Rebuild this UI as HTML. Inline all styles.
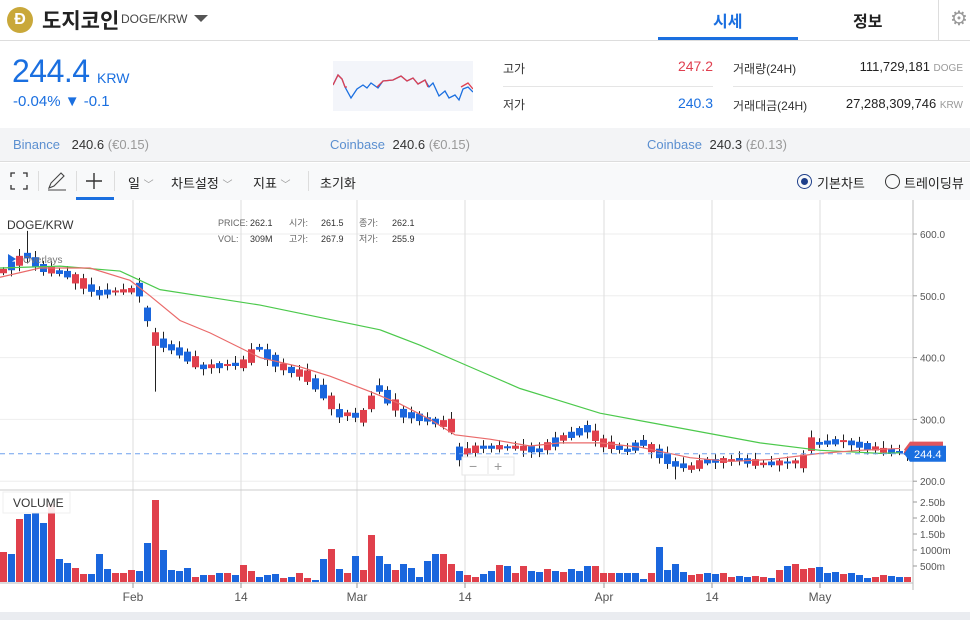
<!DOCTYPE html>
<html><head><meta charset="utf-8">
<style>
*{margin:0;padding:0;box-sizing:border-box}
body{width:970px;height:620px;overflow:hidden;background:#fff;font-family:"Liberation Sans","Noto Sans CJK KR",sans-serif;color:#222;position:relative}
.a{position:absolute;white-space:nowrap}
</style></head><body>
<div class="a" style="left:7px;top:7px;width:26px;height:26px;border-radius:50%;background:#c9a83a;color:#fff;font-weight:bold;font-size:16px;text-align:center;line-height:26px">Ð</div>
<div class="a" style="left:42px;top:5px;font-size:21px;font-weight:bold;color:#222">도지코인</div>
<div class="a" style="left:121px;top:12px;font-size:12px;color:#444">DOGE/KRW</div>
<div class="a" style="left:194px;top:15px;width:0;height:0;border-left:7px solid transparent;border-right:7px solid transparent;border-top:7px solid #555"></div>
<div class="a" style="left:713px;top:8px;font-size:16px;font-weight:bold;color:#1a6fe0">시세</div>
<div class="a" style="left:658px;top:37px;width:140px;height:3px;background:#1a6fe0"></div>
<div class="a" style="left:853px;top:8px;font-size:16px;font-weight:bold;color:#222">정보</div>
<div class="a" style="left:938px;top:0;width:1px;height:40px;background:#ddd"></div>
<div class="a" style="left:950px;top:6px;font-size:20px;color:#999">⚙</div>
<div class="a" style="left:0;top:40px;width:970px;height:1px;background:#ddd"></div>
<div class="a" style="left:12px;top:53px;font-size:32px;color:#1a6fe0;letter-spacing:-0.5px">244.4</div>
<div class="a" style="left:97px;top:70px;font-size:14px;color:#1a6fe0">KRW</div>
<div class="a" style="left:13px;top:93px;font-size:15px;color:#1a6fe0">-0.04% ▼ -0.1</div>
<svg class="a" style="left:333px;top:61px" width="140" height="50">
<rect width="140" height="50" fill="#f3f5fa"/>
<path d="M0 24 L5 14 L9 18 L12 26 L18 37 L24 28 L30 24 L34 27 L38 22 L45 27 L50 20 L60 19 L68 15 L74 20 L80 17 L85 23 L92 19 L96 26 L100 22 L106 35 L112 30 L116 37 L122 34 L126 39 L130 28 L135 26 L140 31" fill="none" stroke="#1a6fe0" stroke-width="1.3"/>
<path d="M0 24 L5 14 L9 18 L12 26 L14 26 M44 26 L50 20 L60 19 L68 15 L74 20 L80 17 L85 23 L92 19 L95 26 M128 26 L135 22 L140 28" fill="none" stroke="#e04050" stroke-width="1.3"/>
</svg>
<div class="a" style="left:503px;top:60px;font-size:12px;color:#333">고가</div>
<div class="a" style="left:600px;top:58px;width:113px;text-align:right;font-size:14px;color:#e04050">247.2</div>
<div class="a" style="left:503px;top:86px;width:210px;height:1px;background:#e5e5e5"></div>
<div class="a" style="left:503px;top:96px;font-size:12px;color:#333">저가</div>
<div class="a" style="left:600px;top:95px;width:113px;text-align:right;font-size:14px;color:#1a6fe0">240.3</div>
<div class="a" style="left:733px;top:60px;font-size:12px;color:#333">거래량(24H)</div>
<div class="a" style="left:800px;top:59px;width:163px;text-align:right;font-size:13px;color:#222">111,729,181 <span style="font-size:10px;color:#999">DOGE</span></div>
<div class="a" style="left:733px;top:86px;width:230px;height:1px;background:#e5e5e5"></div>
<div class="a" style="left:733px;top:97px;font-size:12px;color:#333">거래대금(24H)</div>
<div class="a" style="left:800px;top:96px;width:163px;text-align:right;font-size:13px;color:#222">27,288,309,746 <span style="font-size:10px;color:#999">KRW</span></div>
<div class="a" style="left:0;top:128px;width:970px;height:34px;background:#f3f4f6;border-bottom:1px solid #ddd"></div>
<div class="a" style="left:13px;top:137px;font-size:13px;color:#5b8fd0">Binance <span style="color:#333;margin-left:8px">240.6</span> <span style="color:#999">(€0.15)</span></div>
<div class="a" style="left:330px;top:137px;font-size:13px;color:#5b8fd0">Coinbase <span style="color:#333;margin-left:4px">240.6</span> <span style="color:#999">(€0.15)</span></div>
<div class="a" style="left:647px;top:137px;font-size:13px;color:#5b8fd0">Coinbase <span style="color:#333;margin-left:4px">240.3</span> <span style="color:#999">(£0.13)</span></div>
<div class="a" style="left:0;top:163px;width:970px;height:37px;background:#f8f9fa"></div>
<svg class="a" style="left:10px;top:172px" width="18" height="18"><path d="M1 5V1H5M13 1H17V5M17 13V17H13M5 17H1V13" fill="none" stroke="#333" stroke-width="1.3"/></svg>
<div class="a" style="left:38px;top:171px;width:1px;height:20px;background:#ddd"></div>
<svg class="a" style="left:47px;top:171px" width="20" height="20"><path d="M2 17L4 12L14 2L17 5L7 15Z M1 19H19" fill="none" stroke="#444" stroke-width="1.1"/></svg>
<div class="a" style="left:76px;top:171px;width:1px;height:20px;background:#ddd"></div>
<svg class="a" style="left:85px;top:172px" width="18" height="18"><path d="M9 1V17M1 9H17" stroke="#333" stroke-width="1.4"/></svg>
<div class="a" style="left:76px;top:197px;width:38px;height:3px;background:#1a6fe0"></div>
<div class="a" style="left:114px;top:171px;width:1px;height:20px;background:#ddd"></div>
<div class="a" style="left:128px;top:173px;font-size:13px;color:#222">일 <span style="color:#999;font-size:10px">﹀</span></div>
<div class="a" style="left:171px;top:173px;font-size:13px;color:#222">차트설정 <span style="color:#999;font-size:10px">﹀</span></div>
<div class="a" style="left:253px;top:173px;font-size:13px;color:#222">지표 <span style="color:#999;font-size:10px">﹀</span></div>
<div class="a" style="left:308px;top:171px;width:1px;height:20px;background:#ddd"></div>
<div class="a" style="left:320px;top:173px;font-size:13px;color:#222">초기화</div>
<div class="a" style="left:797px;top:174px;width:15px;height:15px;border-radius:50%;border:1.5px solid #1e3f8a"><div style="margin:2.5px;width:7px;height:7px;border-radius:50%;background:#1e3f8a"></div></div>
<div class="a" style="left:817px;top:173px;font-size:13px;color:#222">기본차트</div>
<div class="a" style="left:885px;top:174px;width:15px;height:15px;border-radius:50%;border:1.5px solid #333"></div>
<div class="a" style="left:904px;top:173px;font-size:13px;color:#222">트레이딩뷰</div>
<svg id="ch" class="a" style="left:0;top:200px" width="970" height="420" font-family="Liberation Sans, Noto Sans CJK KR, sans-serif"></svg>
<div class="a" style="left:0;top:612px;width:970px;height:8px;background:#eaecf0"></div>
<script>
var s=document.getElementById('ch'),h='';
function Y(p){return 34+(600-p)*0.618;}
[600,500,400,300,200].forEach(function(p){h+='<line x1="0" x2="913" y1="'+Y(p)+'" y2="'+Y(p)+'" stroke="#eee"/>';});
[133,241,357,465,604,712,820].forEach(function(x){h+='<line x1="'+x+'" x2="'+x+'" y1="0" y2="388" stroke="#ddd"/>';});
h+='<line x1="0" x2="913" y1="290" y2="290" stroke="#ccc"/>';
h+='<line x1="913" x2="913" y1="0" y2="390" stroke="#bbb"/>';
h+='<line x1="0" x2="913" y1="383" y2="383" stroke="#bbb"/>';
var K=[[0,540],[3,565],[5,545],[8,535],[12,505],[17,510],[19,430],[22,410],[25,385],[30,390],[32,415],[35,385],[38,370],[40,345],[42,310],[45,305],[47,350],[50,310],[53,300],[56,290],[57,245],[60,255],[64,255],[67,250],[70,270],[73,285],[75,262],[78,250],[80,262],[84,228],[86,222],[88,232],[92,235],[95,228],[100,232],[101,260],[105,265],[110,250],[114,244]];
function P(i){if(i<0)i=0;if(i>114)i=114;for(var k=0;k<K.length-1;k++){if(i>=K[k][0]&&i<=K[k+1][0]){var t=(i-K[k][0])/(K[k+1][0]-K[k][0]);return K[k][1]+t*(K[k+1][1]-K[k][1]);}}return 244;}
var V=[30,28,63,68,69,59,78,23,19,14,8,8,28,13,9,9,12,11,39,82,32,12,11,14,5,7,7,9,9,7,17,11,5,7,8,4,5,9,4,2,23,33,13,9,26,12,47,26,18,12,18,14,5,21,28,28,18,11,7,5,
8,11,17,16,9,16,11,10,13,11,10,13,11,16,16,9,9,9,9,9,3,9,35,12,18,10,7,8,9,8,9,5,6,5,6,5,4,12,16,18,13,14,15,9,10,8,9,7,4,5,7,6,5,5];
var C='rbrbbbrbbrrbbbrrrbbrbbbbrbrbrbrrbbbrbrrbbrbrbrrbbrbbbbbrrbrr'+'bbrbrrbbrbrbbbrrrbbbbrbbbbrrbbrrbbrrbrbrrrbbbrbbbrrbbrb';
for(var i=0;i<114;i++){
 var x=8*i,c=(C[i]||'b')=='r'?'#e0404c':'#1a66dd',v=V[i]||6,m=P(i),d=Math.min(22,Math.max(3,Math.abs(P(i+1)-P(i-1))*0.6+2+(i*37%7))),
 o=c=='#e0404c'?m-d/2:m+d/2,cl=c=='#e0404c'?m+d/2:m-d/2,hi=Math.max(o,cl)+3+(i*13%9),lo=Math.min(o,cl)-3-(i*7%8);
 if(i==19)lo=m-85; if(i==3)hi=m+40; if(i==84)lo=m-25;
 var yt=Y(Math.max(o,cl)),yb=Y(Math.min(o,cl));
 h+='<line x1="'+(x+3.5)+'" x2="'+(x+3.5)+'" y1="'+Y(hi)+'" y2="'+Y(lo)+'" stroke="#222"/>';
 h+='<rect x="'+x+'" y="'+yt+'" width="7" height="'+Math.max(2,yb-yt)+'" fill="'+c+'"/>';
 h+='<rect x="'+x+'" y="'+(382-v)+'" width="7" height="'+v+'" fill="'+c+'"/>';
}
function line(pts,col){var d='';pts.forEach(function(p,j){d+=(j?'L':'M')+p[0]+' '+Y(p[1]);});h+='<path d="'+d+'" fill="none" stroke="'+col+'" stroke-width="1.2"/>';}
line([[0,545],[60,548],[120,540],[160,510],[200,500],[260,485],[320,465],[380,445],[420,420],[470,385],[520,350],[560,330],[600,310],[650,295],[700,280],[760,262],[820,250],[880,245],[900,246]],'#4cc94c');
line([[0,530],[40,545],[90,545],[130,525],[150,500],[180,460],[210,440],[260,400],[300,385],[330,370],[370,345],[400,325],[430,300],[455,275],[490,268],[530,257],[560,262],[600,262],[640,255],[690,238],[730,232],[770,235],[820,245],[860,250],[900,253]],'#ea6a6a');
h+='<line x1="0" x2="905" y1="'+Y(244.4)+'" y2="'+Y(244.4)+'" stroke="#6fa0ee" stroke-dasharray="5,4"/>';
[600,500,400,300,200].forEach(function(p){h+='<line x1="913" x2="917" y1="'+Y(p)+'" y2="'+Y(p)+'" stroke="#999"/><text x="920" y="'+(Y(p)+4)+'" font-size="10" fill="#555">'+p.toFixed(1)+'</text>';});
[['2.50b',302],['2.00b',318],['1.50b',334],['1000m',350],['500m',366]].forEach(function(a){h+='<line x1="913" x2="917" y1="'+a[1]+'" y2="'+a[1]+'" stroke="#999"/><text x="920" y="'+(a[1]+4)+'" font-size="10" fill="#555">'+a[0]+'</text>';});
h+='<path d="M910 '+(Y(251)-8)+'H943V'+(Y(251)+8)+'H910L904 '+Y(251)+'Z" fill="#e0565e"/>';
h+='<path d="M910 '+(Y(244.4)-8)+'H946V'+(Y(244.4)+8)+'H910L904 '+Y(244.4)+'Z" fill="#1a6fe0"/><text x="914" y="'+(Y(244.4)+4)+'" font-size="11" fill="#fff">244.4</text>';
[['Feb',133],['14',241],['Mar',357],['14',465],['Apr',604],['14',712],['May',820]].forEach(function(a){h+='<line x1="'+a[1]+'" x2="'+a[1]+'" y1="383" y2="388" stroke="#999"/><text x="'+a[1]+'" y="401" text-anchor="middle" font-size="12" fill="#555">'+a[0]+'</text>';});
h+='<text x="7" y="29" font-size="12" fill="#333">DOGE/KRW</text><text x="23" y="63" font-size="10" fill="#777">Overlays</text><path d="M8 54L16 59L8 64Z" fill="#1a66dd"/>';
h+='<g font-size="9" fill="#666"><text x="218" y="26">PRICE:</text><text x="250" y="26" fill="#333">262.1</text><text x="289" y="26">시가:</text><text x="321" y="26" fill="#333">261.5</text><text x="359" y="26">종가:</text><text x="392" y="26" fill="#333">262.1</text>';
h+='<text x="218" y="42">VOL:</text><text x="250" y="42" fill="#333">309M</text><text x="289" y="42">고가:</text><text x="321" y="42" fill="#333">267.9</text><text x="359" y="42">저가:</text><text x="392" y="42" fill="#333">255.9</text></g>';
h+='<rect x="3" y="292" width="67" height="21" fill="#fff" opacity="0.9" stroke="#eee"/><text x="13" y="307" font-size="12" fill="#333">VOLUME</text>';
h+='<rect x="462" y="257" width="52" height="18" fill="#fff" stroke="#e6e6e6"/><line x1="488" x2="488" y1="258" y2="274" stroke="#e6e6e6"/><text x="469" y="271" font-size="14" fill="#999">−</text><text x="494" y="271" font-size="14" fill="#999">+</text>';
s.innerHTML=h;
</script>
</body></html>
